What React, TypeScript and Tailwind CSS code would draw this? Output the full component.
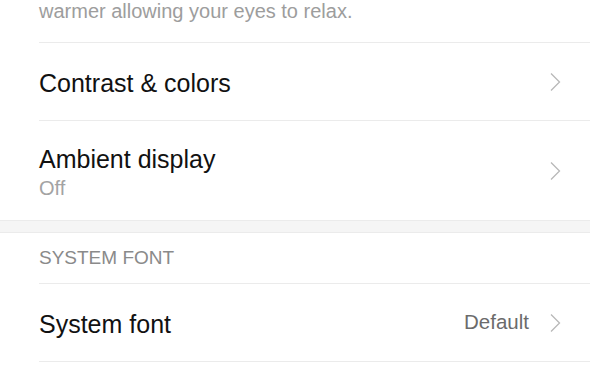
function Chevron() {
  return (
    <svg width="12" height="20" viewBox="0 0 12 20" className="shrink-0">
      <path d="M2 1.5 L10.5 10 L2 18.5" fill="none" stroke="#b8b8b8" strokeWidth="1.3" />
    </svg>
  )
}

function Row({ title, sub, value }: { title: string; sub?: string; value?: string }) {
  return (
    <div
      className={
        "flex items-center pr-[29px] " +
        (sub ? "h-[99px]" : "h-[78px] border-b border-[#ebebeb]")
      }
    >
      <div className="flex-1 pt-[3px]">
        <div className="text-[25px] leading-[28px] text-[#111]">{title}</div>
        {sub && <div className="text-[20px] leading-[22px] text-[#a3a3a3] mt-[4px]">{sub}</div>}
      </div>
      {value && <div className="text-[20.5px] text-[#6b6b6b] mr-[20px]">{value}</div>}
      <Chevron />
    </div>
  )
}

export default function App() {
  return (
    <div className="w-[590px] h-[389px] bg-white overflow-hidden font-['Liberation_Sans',Arial,sans-serif]">
      <div className="pl-[39px]">
        <div className="h-[43px] border-b border-[#ebebeb] text-[20px] leading-[20px] text-[#9d9d9d] pt-[1px]">
          warmer allowing your eyes to relax.
        </div>
        <Row title="Contrast & colors" />
        <Row title="Ambient display" sub="Off" />
      </div>
      <div className="h-[13px] bg-[#f5f5f5] border-y border-[#ebebeb]" />
      <div className="pl-[39px]">
        <div className="h-[51px] border-b border-[#ebebeb] flex items-center text-[19px] text-[#8a8a8a] uppercase">
          System font
        </div>
        <Row title="System font" value="Default" />
      </div>
    </div>
  )
}
